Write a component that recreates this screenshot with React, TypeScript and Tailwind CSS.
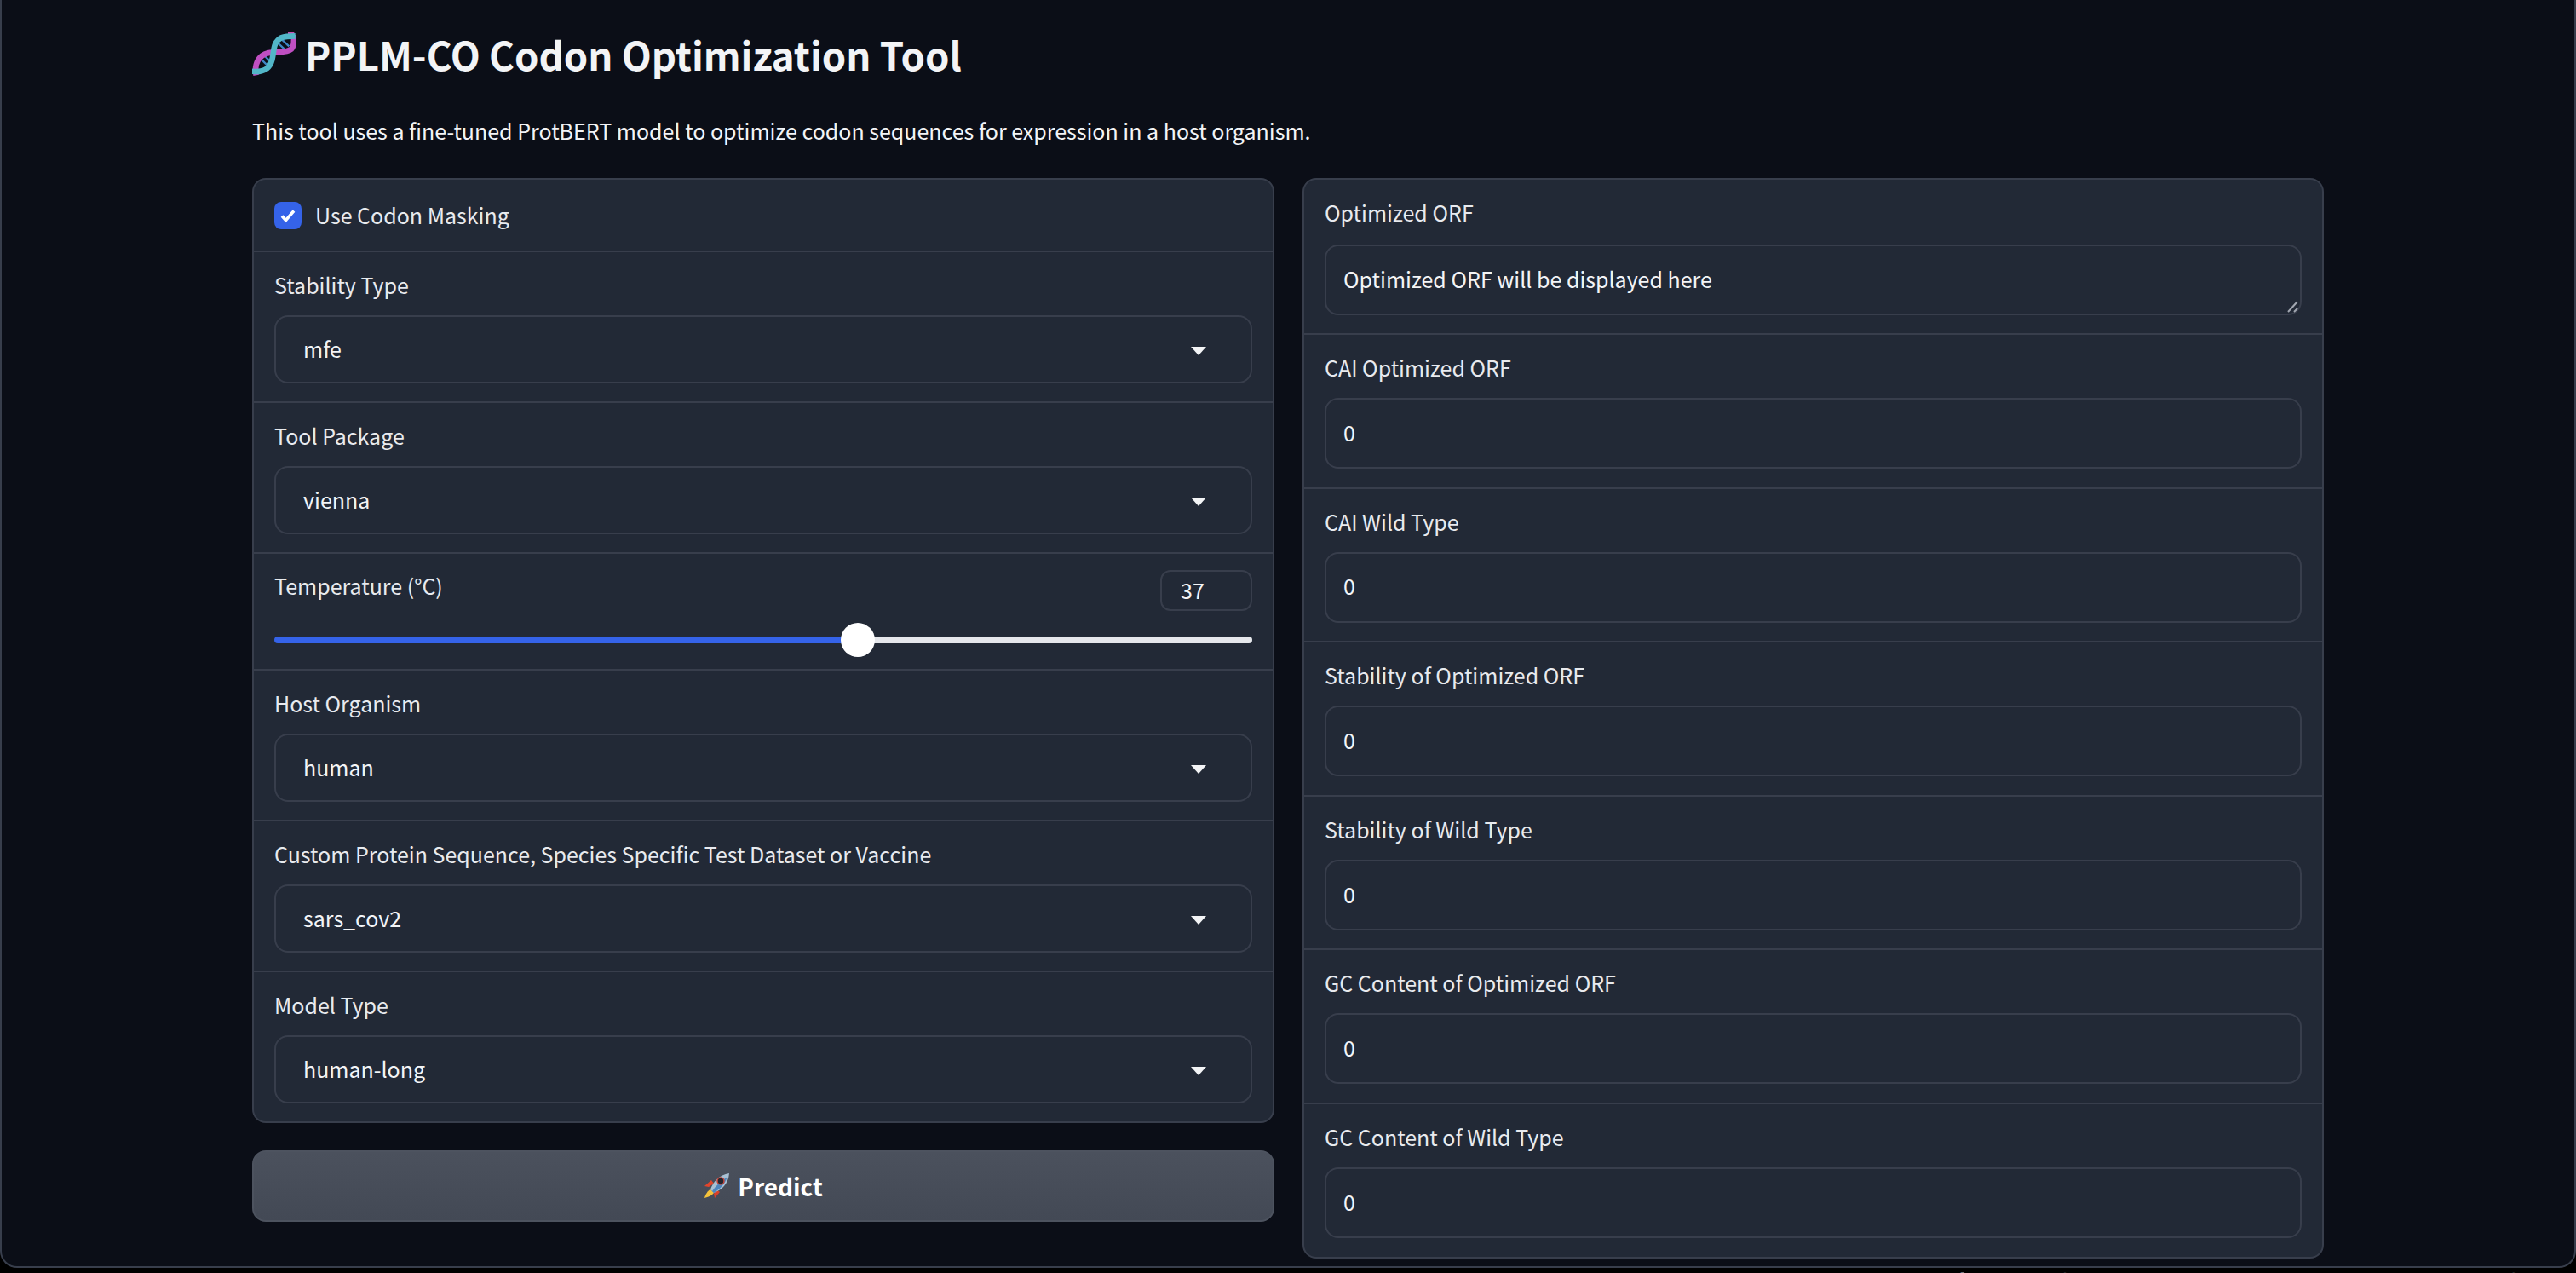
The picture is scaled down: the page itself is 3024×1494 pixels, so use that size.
const font = { fontFamily: '"Noto Sans CJK SC", "Noto Sans", sans-serif' };

function Label({ children }: { children: React.ReactNode }) {
  return <div className="text-[25px] leading-[36px] text-[#e8eaee]">{children}</div>;
}

function Caret() {
  return (
    <svg width="18" height="10" viewBox="0 0 18 10" className="mt-[4px] shrink-0">
      <path d="M0 0h18L9 10z" fill="#f3f4f6" />
    </svg>
  );
}

function SelectBlock({ label, value }: { label: string; value: string }) {
  return (
    <div className="flex h-[177px] flex-col gap-[18px] border-t-2 border-[#383e4c] px-[24px] pt-[20px]">
      <Label>{label}</Label>
      <div className="flex h-[80px] items-center justify-between rounded-[16px] border-2 border-[#383e4c] pl-[32px] pr-[52px] text-[25px] text-[#f3f4f6]">
        <span>{value}</span>
        <Caret />
      </div>
    </div>
  );
}

function OutputBlock({ label, value, first, area }: { label: string; value: string; first?: boolean; area?: boolean }) {
  return (
    <div className={first ? "flex h-[180px] flex-col gap-[20px] px-[24px] pt-[20px]" : "flex h-[180.6px] flex-col gap-[18px] border-t-2 border-[#383e4c] px-[24px] pt-[20px]"}>
      <Label>{label}</Label>
      <div className="relative flex h-[83px] items-center rounded-[16px] border-2 border-[#383e4c] px-[20px] pb-[2px] text-[25px] text-[#f3f4f6]">
        {value}
        {area && (
          <svg width="16" height="16" viewBox="0 0 16 16" className="absolute bottom-0 right-0">
            <path d="M2 14L13 2M9 14L13 10" stroke="#a1a6b0" strokeWidth="2" fill="none" />
          </svg>
        )}
      </div>
    </div>
  );
}

function DnaIcon() {
  return (
    <svg width="52" height="54" viewBox="36 36 156 160" className="shrink-0">
      <g fill="none" strokeLinecap="butt" strokeLinejoin="round">
        <path d="M60 128l32 32M74 118l30 30M122 74l34 32M138 64l28 26" stroke="#3f86c4" strokeWidth="7" />
        <path d="M50 192C42 150 60 122 92 114c30-8 62 2 82-14 10-10 10-28 8-50" stroke="#bf4fc2" strokeWidth="20" />
        <path d="M162 44h22" stroke="#c94fb4" strokeWidth="9" />
        <path d="M34 178c34 4 62-2 72-40 8-30 2-62 32-78 16-6 34-6 50-6" stroke="#52b6c8" strokeWidth="20" />
      </g>
    </svg>
  );
}

function RocketIcon() {
  return (
    <svg width="30" height="30" viewBox="0 0 30 30" className="shrink-0">
      <path d="M1 15l8-7 3 4-6 4z" fill="#e2452c" />
      <path d="M13 29l6-7-4-3-3 5z" fill="#d8402a" />
      <path d="M8 19c-3 1-6 6-7 10 4-1 9-3 11-6z" fill="#f5c33b" />
      <path d="M8 19C11 10 18 2 30 0c-1 12-8 19-18 23z" fill="#a9c0d3" />
      <path d="M10 21c4-6 10-12 18-17-3 8-8 14-16 19z" fill="#4f86bd" />
      <circle cx="20" cy="9" r="4" fill="#26262e" stroke="#c9463a" strokeWidth="1.5" />
    </svg>
  );
}

export default function App() {
  return (
    <div style={font} className="h-[1494px] w-full overflow-hidden bg-black">
      <div className="h-[1488px] rounded-b-[20px] border-x-2 border-b-2 border-[#383e4c] bg-[#0b0e17] px-[294px]">
        <div className="flex items-center gap-[10px] pt-[33px]">
          <DnaIcon />
          <h1 className="text-[45.5px] font-bold leading-[60px] text-[#f3f4f6]">PPLM-CO Codon Optimization Tool</h1>
        </div>
        <p className="mt-[42px] text-[25px] leading-[36px] text-[#f3f4f6]">
          This tool uses a fine-tuned ProtBERT model to optimize codon sequences for expression in a host organism.
        </p>

        <div className="mt-[38px] flex gap-[33px]">
          <div className="flex w-[1200px] shrink-0 flex-col gap-[32px]">
            <div className="overflow-hidden rounded-[16px] border-2 border-[#383e4c] bg-[#222936]">
              <div className="flex h-[83px] items-center gap-[16px] px-[24px]">
                <div className="flex h-[32px] w-[32px] items-center justify-center rounded-[8px] bg-[#3563e9]">
                  <svg width="20" height="20" viewBox="0 0 20 20">
                    <path d="M3 10.5l4.5 5L17 4.5" stroke="#fff" strokeWidth="3.5" fill="none" />
                  </svg>
                </div>
                <span className="text-[25px] text-[#e8eaee]">Use Codon Masking</span>
              </div>
              <SelectBlock label="Stability Type" value="mfe" />
              <SelectBlock label="Tool Package" value="vienna" />
              <div className="h-[137px] border-t-2 border-[#383e4c] px-[24px] pt-[19px]">
                <div className="flex items-start justify-between">
                  <Label>Temperature (°C)</Label>
                  <div className="flex h-[48px] w-[108px] items-center rounded-[12px] border-2 border-[#383e4c] pl-[22px] text-[25px] text-[#f3f4f6]">37</div>
                </div>
                <div className="relative mt-[14px] flex h-[40px] items-center">
                  <div className="h-[8px] w-[685px] rounded-l-full bg-[#3563e9]" />
                  <div className="h-[8px] flex-1 rounded-r-full bg-[#e5e7eb]" />
                  <div className="absolute left-[665px] top-0 h-[40px] w-[40px] rounded-full bg-white" />
                </div>
              </div>
              <SelectBlock label="Host Organism" value="human" />
              <SelectBlock label="Custom Protein Sequence, Species Specific Test Dataset or Vaccine" value="sars_cov2" />
              <SelectBlock label="Model Type" value="human-long" />
            </div>
            <button className="flex h-[84px] items-center justify-center gap-[10px] rounded-[16px] border-2 border-[#4d535f] bg-gradient-to-b from-[#4b515d] to-[#434955] text-[28px] font-bold text-white">
              <RocketIcon />
              Predict
            </button>
          </div>

          <div className="min-w-0 flex-1 self-start overflow-hidden rounded-[16px] border-2 border-[#383e4c] bg-[#222936]">
            <OutputBlock first area label="Optimized ORF" value="Optimized ORF will be displayed here" />
            <OutputBlock label="CAI Optimized ORF" value="0" />
            <OutputBlock label="CAI Wild Type" value="0" />
            <OutputBlock label="Stability of Optimized ORF" value="0" />
            <OutputBlock label="Stability of Wild Type" value="0" />
            <OutputBlock label="GC Content of Optimized ORF" value="0" />
            <OutputBlock label="GC Content of Wild Type" value="0" />
          </div>
        </div>
      </div>
      {/* footer is cut off by the window, only the letter tops show */}
      <div className="-mt-[3px] flex pl-[2297px] text-[25px] leading-[36px] text-[#8b8f97]">
        <span>f</span>
        <span className="ml-[90px]">t</span>
        <span className="ml-[16px]">l</span>
        <span className="ml-[10px]">i</span>
        <span className="ml-[400px]">Pi</span>
        <span className="ml-[20px]">Sh</span>
        <span className="ml-[30px]">l</span>
      </div>
    </div>
  );
}
